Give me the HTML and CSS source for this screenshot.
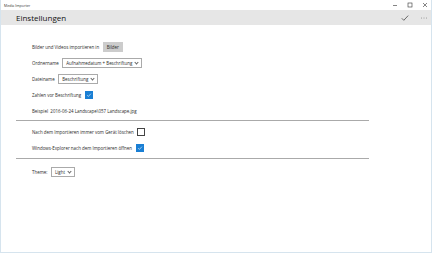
FILE: index.html
```html
<!DOCTYPE html>
<html lang="de">
<head>
    <meta charset="UTF-8">
    <title>Media Importer</title>
    <link rel="stylesheet" href="styles.css">
</head>
<body>
    <div class="window">
        <div class="titlebar">
            <span class="title">Media Importer</span>
            <div class="controls">
                <svg width="6" height="6" viewBox="0 0 6 6"><line x1="1" y1="3.5" x2="5" y2="3.5" stroke="#333" stroke-width="0.6"/></svg>
                <svg width="6" height="6" viewBox="0 0 6 6"><rect x="1" y="1" width="4" height="4" fill="none" stroke="#333" stroke-width="0.6"/></svg>
                <svg width="6" height="6" viewBox="0 0 6 6"><path d="M1 1 L5 5 M5 1 L1 5" stroke="#333" stroke-width="0.6"/></svg>
            </div>
        </div>

        <div class="header">
            <h1>Einstellungen</h1>
            <div class="actions">
                <svg width="8" height="8" viewBox="0 0 8 8"><path d="M0.8 4.3 L2.8 6.3 L7.2 1.6" fill="none" stroke="#333" stroke-width="0.7"/></svg>
                <svg width="8" height="8" viewBox="0 0 8 8"><circle cx="1.5" cy="4" r="0.45" fill="#555"/><circle cx="4" cy="4" r="0.45" fill="#555"/><circle cx="6.5" cy="4" r="0.45" fill="#555"/></svg>
            </div>
        </div>

        <div class="content">
            <div class="group">
                <div class="row">
                    <span>Bilder und Videos importieren in</span>
                    <span class="btn">Bilder</span>
                </div>
                <div class="row">
                    <span>Ordnername</span>
                    <span class="select">Aufnahmedatum + Beschriftung <i class="chev"></i></span>
                </div>
                <div class="row">
                    <span>Dateiname</span>
                    <span class="select">Beschriftung <i class="chev"></i></span>
                </div>
                <div class="row">
                    <span>Zahlen vor Beschriftung</span>
                    <span class="check on"><svg viewBox="0 0 8 8"><path d="M1.5 4.2 L3.2 5.9 L6.6 2.2" fill="none" stroke="#fff" stroke-width="0.8"/></svg></span>
                </div>
                <div class="row">
                    <span>Beispiel&nbsp;&nbsp;2016-06-24 Landscape\057 Landscape.jpg</span>
                </div>
            </div>

            <div class="group">
                <div class="row">
                    <span>Nach dem Importieren immer vom Gerät löschen</span>
                    <span class="check"></span>
                </div>
                <div class="row">
                    <span>Windows-Explorer nach dem Importieren öffnen</span>
                    <span class="check on"><svg viewBox="0 0 8 8"><path d="M1.5 4.2 L3.2 5.9 L6.6 2.2" fill="none" stroke="#fff" stroke-width="0.8"/></svg></span>
                </div>
            </div>

            <div class="group last">
                <div class="row">
                    <span>Theme:</span>
                    <span class="select">Light <i class="chev"></i></span>
                </div>
            </div>
        </div>
    </div>
</body>
</html>
```

FILE: styles.css
```css
body { margin: 0; font-family: "Open Sans", "Noto Sans", sans-serif; color: #2b2b2b; background: #fff; }
.window { width: 432px; height: 253px; box-sizing: border-box; border: 1px solid #d6e4ee; border-top: none; background: #fff; }
.titlebar { height: 10px; display: flex; align-items: center; justify-content: space-between; padding: 0 3px 0 3px; }
.title { font-size: 3.6px; color: #333; }
.controls { display: flex; gap: 9px; }
.header { height: 15px; background: #e6e6e6; display: flex; align-items: center; justify-content: space-between; padding: 0 3px 0 15px; }
h1 { margin: 0; font-size: 8px; font-weight: 400; color: #111; }
.actions { display: flex; gap: 11px; align-items: center; }
.content { padding: 14px 0 0 15px; width: 353px; }
.group { border-bottom: 1px solid #aaa; padding: 0 0 1px 16px; }
.group + .group { padding-top: 3px; padding-bottom: 2px; }
.group.last { border-bottom: none; padding-top: 5px; }
.row { height: 16px; display: flex; align-items: center; gap: 3.5px; font-size: 4.45px; white-space: nowrap; }
.btn { background: #ccc; padding: 0 4px; height: 10px; line-height: 10px; }
.select { border: 1px solid #aaa; height: 8px; line-height: 8px; padding: 0 3px; display: flex; align-items: center; gap: 3px; }
.chev { width: 2px; height: 2px; border-right: 0.5px solid #666; border-bottom: 0.5px solid #666; transform: rotate(45deg); margin-top: -1.5px; }
.check { width: 6px; height: 6px; border: 1px solid #444; display: inline-block; }
.check.on { background: #1a7fd4; border-color: #1a7fd4; }
.check svg { width: 6px; height: 6px; display: block; }
```
